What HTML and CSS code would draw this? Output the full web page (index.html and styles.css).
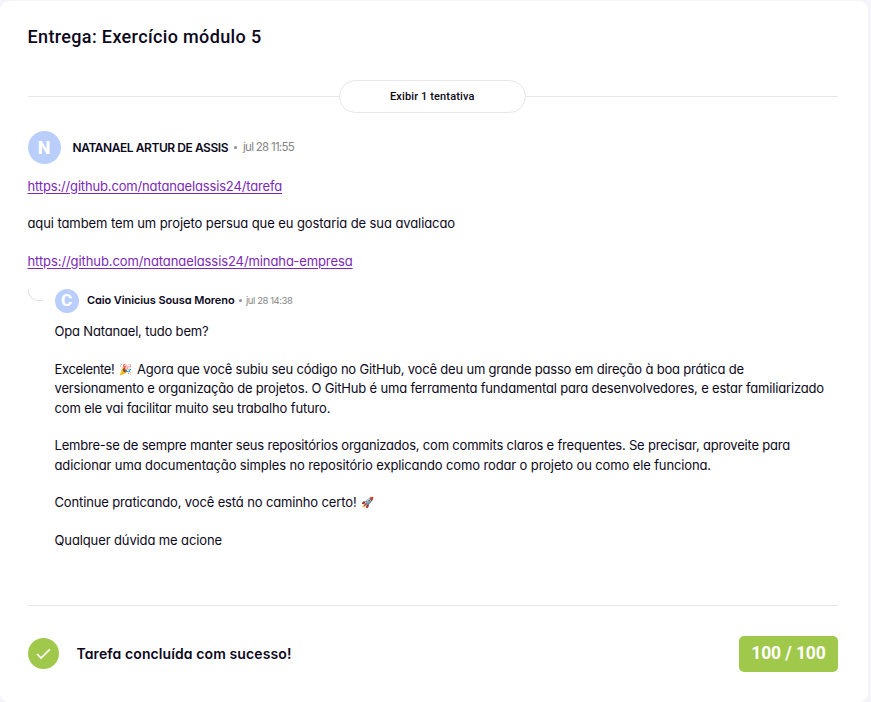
FILE: index.html
```html
<!DOCTYPE html>
<html lang="pt-BR">
<head>
<meta charset="utf-8">
<title>Entrega: Exercício módulo 5</title>
<link rel="stylesheet" href="styles.css">
</head>
<body>
<main class="card">
  <h1 class="title">Entrega: Exercício módulo 5</h1>
  <div class="attempts">
    <span class="rule"></span>
    <button class="attempts-button" type="button">Exibir 1 tentativa</button>
    <span class="rule"></span>
  </div>
  <section class="submission">
    <header class="author">
      <span class="avatar">N</span>
      <strong class="name">NATANAEL ARTUR DE ASSIS</strong>
      <span class="dot"></span>
      <time class="date">jul 28 11:55</time>
    </header>
    <div class="message">
      <p><a class="link fit-156" href="#">https://github.com/natanaelassis24/tarefa</a></p>
      <p class="fit-90">aqui tambem tem um projeto persua que eu gostaria de sua avaliacao</p>
      <p><a class="link fit-90" href="#">https://github.com/natanaelassis24/minaha-empresa</a></p>
    </div>
  </section>
  <section class="reply">
    <span class="thread"></span>
    <div class="reply-body">
      <header class="author author-small">
        <span class="avatar">C</span>
        <strong class="name">Caio Vinicius Sousa Moreno</strong>
        <span class="dot"></span>
        <time class="date">jul 28 14:38</time>
      </header>
      <div class="message">
        <p class="fit-177">Opa Natanael, tudo bem?</p>
        <p><span class="fit-348">Excelente!</span><span class="emoji party">🎉</span><span class="fit-190">Agora que você subiu seu código no GitHub, você deu um grande passo em direção à boa prática de</span><br>
        <span class="fit-172">versionamento e organização de projetos. O GitHub é uma ferramenta fundamental para desenvolvedores, e estar familiarizado</span><br>
        <span class="fit-156">com ele vai facilitar muito seu trabalho futuro.</span></p>
        <p><span class="fit-203">Lembre-se de sempre manter seus repositórios organizados, com commits claros e frequentes. Se precisar, aproveite para</span><br>
        <span class="fit-127">adicionar uma documentação simples no repositório explicando como rodar o projeto ou como ele funciona.</span></p>
        <p><span class="fit-136">Continue praticando, você está no caminho certo!</span><span class="emoji rocket">🚀</span></p>
        <p class="fit-116">Qualquer dúvida me acione</p>
      </div>
    </div>
  </section>
  <footer class="result">
    <span class="check">
      <svg width="15" height="12" viewBox="0 0 15 12" fill="none" stroke="#fff" stroke-width="1.7"><path d="M1 6 5 10 13.8 1.4"/></svg>
    </span>
    <strong class="status">Tarefa concluída com sucesso!</strong>
    <span class="score">100 / 100</span>
  </footer>
</main>
</body>
</html>
```
FILE: styles.css
```css
* { box-sizing: border-box; }

body {
  margin: 0;
  height: 702px;
  padding-top: 1px;
  background: #f4f4fa;
  color: #0c0820;
  font: 13px/19.5px Inter, sans-serif;
  font-feature-settings: "cv11";
  overflow: hidden;
}

.card {
  width: 868px;
  height: 701px;
  padding: 24px 30px 0 27.5px;
  border-radius: 9px;
  background: #fff;
}

.title {
  margin: 0;
  font: 500 18px/24px Roboto, sans-serif;
  letter-spacing: .357px;
}

.attempts {
  display: flex;
  align-items: center;
  margin-top: 31px;
}

.rule {
  flex: 1;
  height: 1px;
  background: #e6e6e9;
}

.attempts-button {
  width: 187px;
  height: 33px;
  margin-right: 1px;
  margin-left: -1px;
  padding: 0;
  border: 1px solid #e6e6e8;
  border-radius: 17px;
  background: #fff;
  color: inherit;
  font: 500 11px/16px Roboto, sans-serif;
  letter-spacing: .128px;
}
.attempts-button + .rule { margin-left: -1px; }

.author {
  display: flex;
  align-items: center;
  height: 33px;
  margin-top: 18px;
}

.avatar {
  display: flex;
  align-items: center;
  justify-content: center;
  width: 33px;
  height: 33px;
  margin-right: 12px;
  border-radius: 50%;
  background: #b9cefa;
  color: #fff;
  font: 800 18px/1 Roboto, sans-serif;
}

.name {
  font-size: 12px;
  font-weight: 600;
  letter-spacing: -.447px;
}

.dot {
  width: 3px;
  height: 3px;
  margin: 0 6px 0 6px;
  border-radius: 50%;
  background: #8d8d93;
}

.date {
  color: #858585;
  font-size: 11.5px;
  letter-spacing: -.72px;
}

.message p { margin: 0 0 18px; white-space: nowrap; }
.submission .message { margin-top: 12.5px; }

.link { color: #7b28b8; text-underline-offset: 2px; }

.reply { display: flex; margin-top: -.5px; }

.thread {
  width: 15px;
  height: 12px;
  margin-right: 12px;
  border: solid #e3e3e6;
  border-width: 0 0 1px 1px;
  border-bottom-left-radius: 10px;
}

.author-small { height: 24px; margin-top: 0; }
.author-small .avatar { width: 24px; height: 24px; margin-right: 8.5px; font-size: 17px; }
.author-small .name { font-size: 11px; letter-spacing: -.089px; }
.author-small .dot { margin: 0 4px 0 4.5px; }
.author-small .date { font-size: 9.5px; letter-spacing: -.44px; }
.reply .message { margin-top: 9.5px; }

.emoji {
  display: inline-block;
  width: 13px;
  font-size: 10.5px;
  line-height: 1;
  letter-spacing: 0;
  vertical-align: 1px;
}
.party { margin: 0 5px 0 4.5px; }
.rocket { margin-left: 4px; }

.fit-90 { letter-spacing: -.09px; }
.fit-116 { letter-spacing: -.116px; }
.fit-127 { letter-spacing: -.127px; }
.fit-136 { letter-spacing: -.136px; }
.fit-156 { letter-spacing: -.156px; }
.fit-172 { letter-spacing: -.172px; }
.fit-177 { letter-spacing: -.177px; }
.fit-190 { letter-spacing: -.19px; }
.fit-203 { letter-spacing: -.203px; }
.fit-348 { letter-spacing: -.348px; }

.result {
  display: flex;
  align-items: center;
  margin-top: 36.5px;
  padding-top: 30px;
  border-top: 1px solid #e6e6e6;
}

.check {
  display: flex;
  align-items: center;
  justify-content: center;
  width: 31px;
  height: 31px;
  margin-right: 18px;
  border-radius: 50%;
  background: #a0c84a;
}

.status {
  font-size: 14px;
  font-weight: 600;
  letter-spacing: .103px;
}

.score {
  width: 99px;
  height: 36px;
  margin-left: auto;
  border-radius: 5px;
  background: #a0c84a;
  color: #fff;
  font: 700 17.5px/35px Roboto, sans-serif;
  letter-spacing: -.1px;
  text-align: center;
}
```
